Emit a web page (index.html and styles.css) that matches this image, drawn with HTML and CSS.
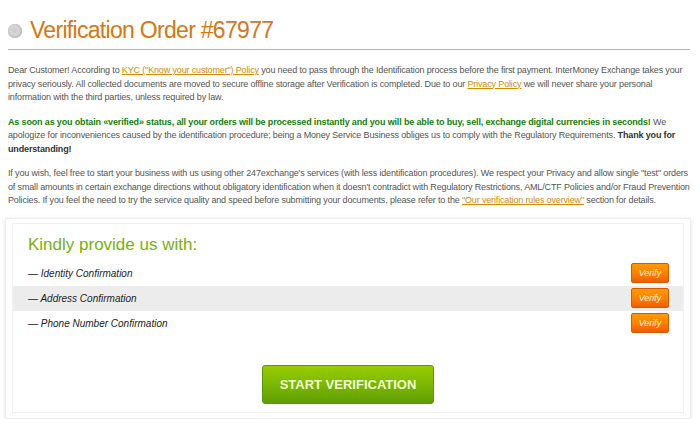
FILE: index.html
```html
<!DOCTYPE html>
<html>
<head>
<meta charset="utf-8">
<link rel="stylesheet" href="styles.css">
</head>
<body>
<div class="page">
  <div class="head">
    <span class="bullet"></span>
    <h1 class="title">Verification Order #67977</h1>
  </div>
  <p class="para">Dear Customer! According to <a class="link" href="#">KYC ("Know your customer") Policy</a> you need to pass through the Identification process before the first payment. InterMoney Exchange takes your privacy seriously. All collected documents are moved to secure offline storage after Verification is completed. Due to our <a class="link" href="#">Privacy Policy</a> we will never share your personal information with the third parties, unless required by law.</p>
  <p class="para"><b class="green">As soon as you obtain «verified» status, all your orders will be processed instantly and you will be able to buy, sell, exchange digital currencies in seconds!</b> We apologize for inconveniences caused by the identification procedure; being a Money Service Business obliges us to comply with the Regulatory Requirements. <b>Thank you for understanding!</b></p>
  <p class="para">If you wish, feel free to start your business with us using other 247exchange's services (with less identification procedures). We respect your Privacy and allow single "test" orders of small amounts in certain exchange directions without obligatory identification when it doesn't contradict with Regulatory Restrictions, AML/CTF Policies and/or Fraud Prevention Policies. If you feel the need to try the service quality and speed before submitting your documents, please refer to the <a class="link" href="#">"Our verification rules overview"</a> section for details.</p>

  <div class="panel">
    <div class="panel-inner">
      <h2 class="subtitle">Kindly provide us with:</h2>
      <div class="row"><span class="item">— Identity Confirmation</span><button class="verify">Verify</button></div>
      <div class="row row-alt"><span class="item">— Address Confirmation</span><button class="verify">Verify</button></div>
      <div class="row"><span class="item">— Phone Number Confirmation</span><button class="verify">Verify</button></div>
      <div class="actions"><button class="start">START VERIFICATION</button></div>
    </div>
  </div>
</div>
</body>
</html>
```
FILE: styles.css
```css
* { box-sizing: border-box; }
html, body { margin: 0; padding: 0; background: #fff; }
body { font-family: "Liberation Sans", Arial, sans-serif; }
.page { width: 700px; padding: 0 10px 0 8px; }

.head {
  display: flex;
  align-items: center;
  gap: 8px;
  height: 50px;
  padding-top: 11px;
  border-bottom: 1px solid #b4b4b4;
}
.bullet {
  width: 14px; height: 14px; border-radius: 50%;
  background: radial-gradient(circle at 45% 45%, #c8c8c8 0, #d8d8d8 40%, #bdbdbd 75%, #a9a9a9 100%);
  box-shadow: inset 0 0 1px #999;
  margin-top: 1px;
}
.title {
  margin: 0;
  font-weight: normal;
  font-size: 23px;
  color: #d9760f;
  letter-spacing: -0.7px;
}

.para {
  margin: 11px 0 0;
  font-size: 9px;
  line-height: 13.5px;
  letter-spacing: -0.15px;
  color: #555;
}
.para:first-of-type { margin-top: 14px; }
.para b { color: #333; }
.para .green { color: #157f0c; }
.link { color: #d68a00; text-decoration: underline; }

.panel {
  margin: 10px -1px 0 -3px;
  padding: 4px 6px 5px 6px;
  border: 1px solid #eee;
  box-shadow: 0 1px 5px rgba(0,0,0,0.10);
  background: #fff;
}
.panel-inner {
  border: 1px solid #f0f0f0;
  padding: 11px 0 8px;
}
.subtitle {
  margin: 0 0 6px 15px;
  font-weight: normal;
  font-size: 17px;
  color: #75b30a;
}
.row {
  display: flex;
  align-items: center;
  justify-content: space-between;
  height: 25px;
  padding: 0 14px 0 15px;
}
.row-alt { background: #ececec; }
.item {
  font-size: 10px;
  font-style: italic;
  color: #222;
}
.verify {
  width: 38px; height: 20px;
  border: 1px solid #d85a00;
  border-radius: 2px;
  background: linear-gradient(#ff9a00, #ff7e00 55%, #ec5f00);
  color: #fff4d8;
  font-family: "Liberation Sans", Arial, sans-serif;
  font-style: italic;
  font-size: 9px;
  padding: 0;
}
.actions {
  display: flex;
  justify-content: center;
  padding: 29px 0 0;
}
.start {
  width: 172px; height: 39px;
  border: 1px solid #5c9a05;
  border-radius: 3px;
  background: linear-gradient(#98cc00, #7bb800 50%, #5f9d03);
  color: #f2ffd6;
  font-family: "Liberation Sans", Arial, sans-serif;
  font-weight: bold;
  font-size: 13px;
  padding: 0;
}
```
